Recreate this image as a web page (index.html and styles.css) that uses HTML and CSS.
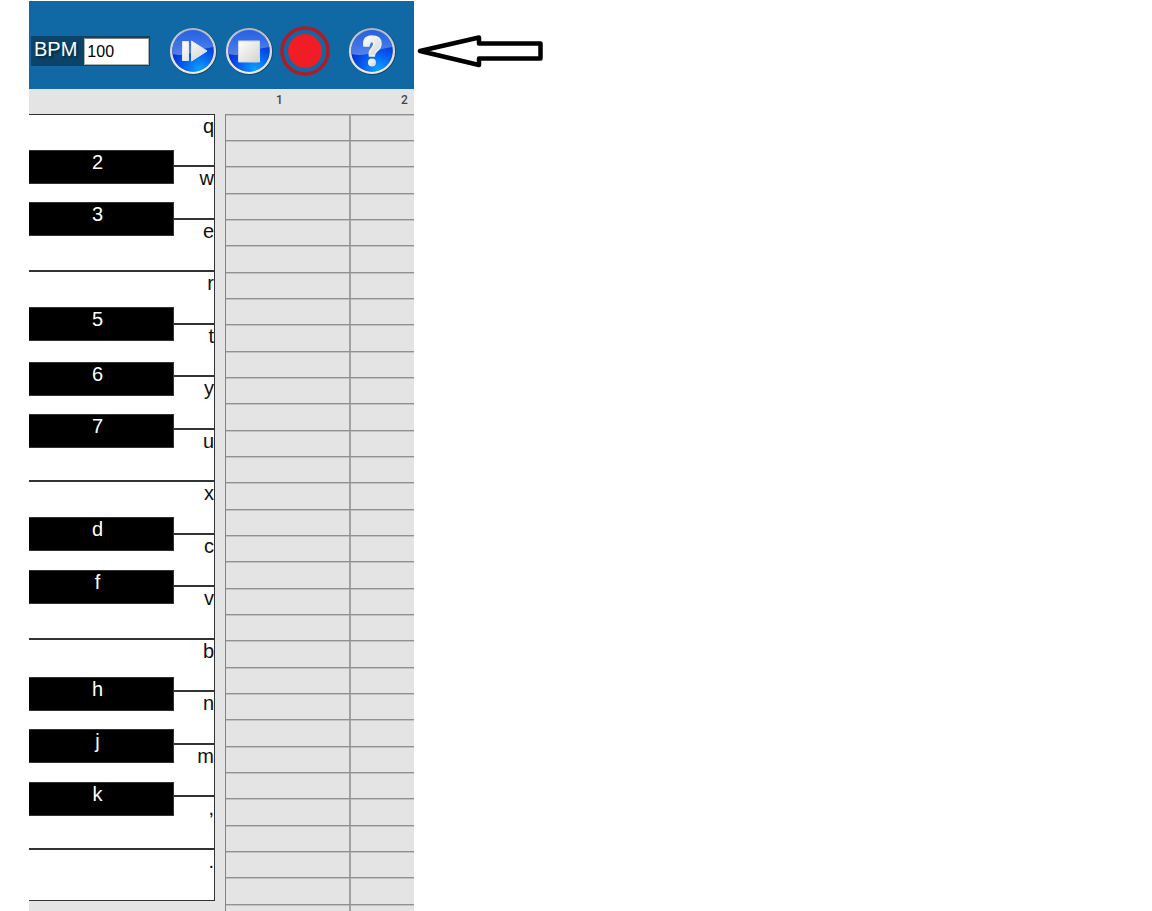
FILE: index.html
```html
<!DOCTYPE html>
<html lang="en">
<head>
<meta charset="utf-8">
<title>Piano Sequencer</title>
<link rel="stylesheet" href="styles.css">
</head>
<body>
<svg class="defs" width="0" height="0" aria-hidden="true">
  <defs>
    <linearGradient id="rim" x1="0" y1="0" x2="0" y2="1">
      <stop offset="0" stop-color="#b4bac4"/>
      <stop offset="0.35" stop-color="#d2d3d4"/>
      <stop offset="1" stop-color="#eceae6"/>
    </linearGradient>
    <radialGradient id="orb" cx="0.65" cy="0.95" r="0.75">
      <stop offset="0" stop-color="#0aa4ff"/>
      <stop offset="0.45" stop-color="#0566f5"/>
      <stop offset="1" stop-color="#0628d0"/>
    </radialGradient>
    <linearGradient id="gloss" x1="0" y1="0" x2="0" y2="1">
      <stop offset="0" stop-color="#2f74ea"/>
      <stop offset="1" stop-color="#6c98ee"/>
    </linearGradient>
    <linearGradient id="glyph" x1="0" y1="0" x2="1" y2="1">
      <stop offset="0" stop-color="#ffffff"/>
      <stop offset="1" stop-color="#d3d3cd"/>
    </linearGradient>
    <g id="ball">
      <circle cx="25.5" cy="25.5" r="23.5" fill="#062c4c" opacity="0.5"/>
      <circle cx="25" cy="25" r="23" fill="#3f5265"/>
      <circle cx="25" cy="25" r="21.800" fill="none" stroke="url(#rim)" stroke-width="2.600"/>
      <circle cx="25" cy="25" r="20.700" fill="url(#orb)"/>
      <path d="M4.500 28A20.700 20.700 0 1 1 45.500 21Q37 22 28 25Q16 31 4.500 28Z" fill="url(#gloss)" opacity="0.75"/>
    </g>
  </defs>
</svg>
<main class="page">
  <section class="app">
    <header class="toolbar">
      <label class="bpm">BPM <input class="bpm-input" type="text" value="100"></label>
      <div class="controls">
        <button class="control" type="button" aria-label="Play">
          <svg viewBox="0 0 50 50"><use href="#ball"/><path d="M14.500 15.500H20.500V34.500H14.500ZM23.500 15L39 25L23.500 35Z" fill="url(#glyph)" stroke="#e4e6ea" stroke-width="1"/></svg>
        </button>
        <button class="control" type="button" aria-label="Stop">
          <svg viewBox="0 0 50 50"><use href="#ball"/><path d="M14.500 15H35.500V36H14.500Z" fill="url(#glyph)" stroke="#d0d6e2" stroke-width="1"/></svg>
        </button>
        <button class="control" type="button" aria-label="Record">
          <svg viewBox="0 0 50 50"><circle cx="25" cy="25" r="23" fill="none" stroke="#b01c26" stroke-width="3.600"/><circle cx="25" cy="25" r="17" fill="#f01c26"/></svg>
        </button>
      </div>
      <button class="control" type="button" aria-label="Help">
        <svg viewBox="0 0 50 50"><use href="#ball"/><path d="M17 20Q15.500 10.500 24.500 10Q34 10 34 17.500Q34 22 29.500 25.500Q27.300 27.500 27.300 30H22.500Q21.500 25.500 25 22Q27.500 19 26.500 16.500Q23.500 13.500 21.800 20Z" fill="url(#glyph)" stroke="#f1f1ee" stroke-width="1.500"/><circle cx="25" cy="36.500" r="4" fill="url(#glyph)"/></svg>
      </button>
    </header>
    <div class="ruler"><span>1</span><span>2</span></div>
    <div class="workspace">
      <div class="keyboard">
        <div class="slot"><button class="white">q</button><button class="black">2</button></div>
        <div class="slot"><button class="white">w</button><button class="black">3</button></div>
        <div class="slot"><button class="white">e</button></div>
        <div class="slot"><button class="white">r</button><button class="black">5</button></div>
        <div class="slot"><button class="white">t</button><button class="black low">6</button></div>
        <div class="slot"><button class="white">y</button><button class="black low">7</button></div>
        <div class="slot"><button class="white">u</button></div>
        <div class="slot"><button class="white">x</button><button class="black">d</button></div>
        <div class="slot"><button class="white">c</button><button class="black">f</button></div>
        <div class="slot"><button class="white">v</button></div>
        <div class="slot"><button class="white">b</button><button class="black low">h</button></div>
        <div class="slot"><button class="white">n</button><button class="black low">j</button></div>
        <div class="slot"><button class="white">m</button><button class="black low">k</button></div>
        <div class="slot"><button class="white">,</button></div>
        <div class="slot"><button class="white">.</button></div>
      </div>
      <div class="roll" id="roll"></div>
    </div>
  </section>
  <svg class="arrow" viewBox="0 0 128 34" role="img" aria-label="Arrow pointing to the toolbar"><path d="M4 17L63 3.500V9.500H124.500V24.500H63V31Z" fill="#fff" stroke="#000" stroke-width="4.500" stroke-linejoin="round"/></svg>
</main>
<script src="roll.js"></script>
</body>
</html>
```

FILE: roll.js
```js
const roll = document.getElementById("roll");
for (let i = 0; i < 31; i++) {
  const row = document.createElement("div");
  row.className = "roll-row";
  for (let beat = 0; beat < 2; beat++) {
    const cell = document.createElement("div");
    cell.className = "cell";
    row.append(cell);
  }
  roll.append(row);
}
```

FILE: styles.css
```css
* {
  box-sizing: border-box;
}

body {
  margin: 0;
  background: #fff;
  font-family: "Liberation Sans", Arial, sans-serif;
}

.defs {
  display: block;
}

.page {
  display: flex;
  align-items: flex-start;
  gap: 2px;
  height: 100vh;
  padding: 1px 0 0 29px;
  overflow: hidden;
}

.app {
  flex: 0 0 385px;
  background: #e4e4e4;
  overflow: hidden;
}

.arrow {
  flex: none;
  width: 128px;
  height: 34px;
  margin-top: 33px;
}

.toolbar {
  display: flex;
  align-items: center;
  height: 88px;
  padding: 12px 17px 0 2px;
  background: #1068a4;
}

.bpm {
  display: flex;
  align-items: flex-start;
  gap: 7px;
  padding: 2px 1px 1px 3px;
  background: #0b4468;
  color: #fff;
  font-size: 20px;
  line-height: 22px;
  text-shadow: 2px 2px 2px #052a42;
}

.bpm-input {
  width: 65px;
  height: 27px;
  padding: 0 2px;
  border: 1px solid #b0b0b0;
  border-top-color: #808080;
  background: #fff;
  color: #000;
  font-family: inherit;
  font-size: 16px;
}

.controls {
  display: flex;
  gap: 6px;
  margin: 0 auto 0 18px;
}

.control {
  width: 50px;
  height: 50px;
  padding: 0;
  border: 0;
  background: none;
}

.control svg {
  display: block;
  overflow: visible;
}

.ruler {
  display: flex;
  height: 25px;
  padding-left: 247px;
  color: #444;
  font-family: Roboto, "Liberation Sans", sans-serif;
  font-size: 12px;
  font-weight: 500;
  line-height: 22px;
}

.ruler span {
  flex: 0 0 125px;
}

.workspace {
  display: flex;
  align-items: flex-start;
  gap: 10px;
}

.keyboard {
  flex: 0 0 186px;
}

.slot {
  position: relative;
  height: 52px;
}

.slot:nth-child(even) {
  height: 53px;
}

.white,
.black {
  display: flex;
  align-items: flex-start;
  border: 1px solid #333;
  border-left: 0;
  padding: 0;
  font-family: inherit;
  font-size: 20px;
  line-height: 22px;
}

.white {
  justify-content: flex-end;
  width: 100%;
  height: 100%;
  background: #fff;
  color: #111;
}

.black {
  position: absolute;
  z-index: 1;
  top: 36px;
  left: 0;
  justify-content: center;
  width: 145px;
  height: 34px;
  padding-right: 7px;
  background: #000;
  color: #fff;
}

.black.low {
  top: 38px;
}

.roll {
  flex: 1;
  border-left: 1px solid #858585;
  overflow: hidden;
}

.roll-row {
  display: flex;
  height: 26px;
  border-top: 1px solid #909090;
  box-shadow: inset 0 1px #c2c2c2;
}

.roll-row:nth-child(3n) {
  height: 27px;
}

.cell {
  flex: 0 0 125px;
  border-right: 2px solid #a2a2a2;
}
```
